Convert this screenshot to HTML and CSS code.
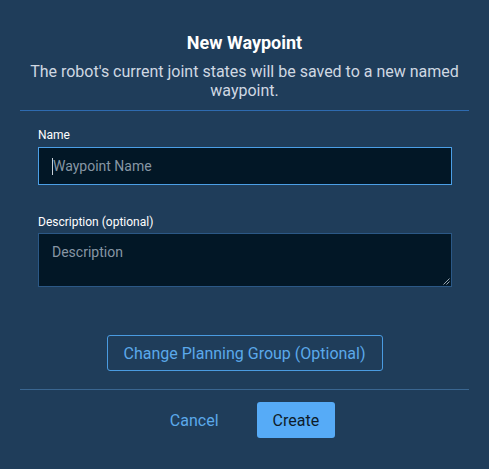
FILE: index.html
```html
<!DOCTYPE html>
<html>
<head>
<meta charset="utf-8">
<link rel="stylesheet" href="styles.css">
</head>
<body>
<div class="dialog">
  <h1 class="title">New Waypoint</h1>
  <p class="subtitle">The robot's current joint states will be saved to a new named waypoint.</p>
  <div class="divider divider-top"></div>
  <div class="form">
    <label class="label">Name</label>
    <div class="input focused"><span class="caret"></span><span class="placeholder">Waypoint Name</span></div>
    <label class="label label-desc">Description (optional)</label>
    <div class="textarea"><span class="placeholder">Description</span>
      <svg class="grip" width="7" height="7" viewBox="0 0 7 7"><path d="M6.5 0.5 L0.5 6.5 M6.5 3.5 L3.5 6.5" stroke="#9aa7b2" stroke-width="1"/></svg>
    </div>
  </div>
  <div class="group-row">
    <button class="outline-btn">Change Planning Group (Optional)</button>
  </div>
  <div class="divider divider-bottom"></div>
  <div class="actions">
    <button class="text-btn">Cancel</button>
    <button class="primary-btn">Create</button>
  </div>
</div>
</body>
</html>
```
FILE: styles.css
```css
html, body {
  margin: 0;
  padding: 0;
  background: #1f3d5a;
  height: 100%;
}
body {
  font-family: Roboto, "Liberation Sans", sans-serif;
  color: #ffffff;
}
.dialog {
  padding: 31px 20px 0 20px;
  display: flex;
  flex-direction: column;
}
.title {
  margin: 0;
  font-size: 18px;
  line-height: 24px;
  font-weight: 700;
  text-align: center;
  color: #ffffff;
}
.subtitle {
  margin: 7px 0 0 0;
  font-size: 16px;
  line-height: 19px;
  text-align: center;
  color: #cfd8e2;
}
.divider {
  height: 1px;
}
.divider-top {
  margin-top: 10px;
  background: #2e6bb0;
}
.divider-bottom {
  margin-top: 18px;
  background: #3a6690;
}
.form {
  padding: 16px 17px 0 18px;
  display: flex;
  flex-direction: column;
}
.label {
  font-size: 12px;
  line-height: 16px;
  font-weight: 400;
  color: #ffffff;
}
.label-desc {
  margin-top: 29px;
}
.input {
  margin-top: 4px;
  height: 38px;
  box-sizing: border-box;
  border: 1px solid #4b9fe6;
  background: #021726;
  display: flex;
  align-items: center;
  padding-left: 13px;
  font-size: 14px;
}
.caret {
  width: 1px;
  height: 17px;
  background: #c8d0d8;
}
.placeholder {
  color: #8796a4;
  font-size: 14px;
}
.textarea {
  position: relative;
  margin-top: 3px;
  height: 54px;
  box-sizing: border-box;
  border: 1px solid #2b5886;
  background: #021726;
  padding: 9px 13px;
  font-size: 14px;
  line-height: 18px;
}
.grip {
  position: absolute;
  right: 1px;
  bottom: 1px;
}
.group-row {
  margin-top: 48px;
  display: flex;
  justify-content: center;
}
.outline-btn {
  width: 276px;
  height: 36px;
  box-sizing: border-box;
  border: 1px solid #4a9be0;
  border-radius: 3px;
  background: transparent;
  color: #5ba9ea;
  font-family: Roboto, "Liberation Sans", sans-serif;
  font-size: 16px;
  padding: 0;
}
.actions {
  margin-top: 12px;
  display: flex;
  justify-content: center;
  gap: 22px;
}
.text-btn, .primary-btn {
  height: 36px;
  box-sizing: border-box;
  padding: 0 16px;
  border: none;
  border-radius: 3px;
  font-family: Roboto, "Liberation Sans", sans-serif;
  font-size: 16px;
}
.text-btn {
  background: transparent;
  color: #5ba9ea;
}
.primary-btn {
  background: #56abf7;
  color: #0e1c2a;
}
```
